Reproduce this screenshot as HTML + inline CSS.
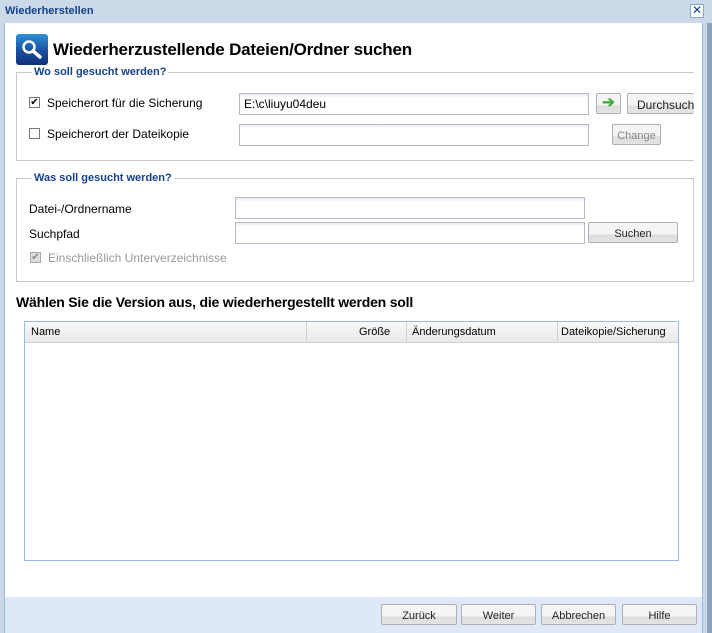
<!DOCTYPE html>
<html><head><meta charset="utf-8"><style>
*{margin:0;padding:0;box-sizing:border-box}
body{width:712px;height:633px;overflow:hidden;background:#c9d7e6;font-family:"Liberation Sans",sans-serif;font-size:12px;color:#000;position:relative}
.a{position:absolute}
.win{left:4px;top:23px;width:699px;height:610px;background:#fff;border-left:1px solid #99bbe8;border-right:1px solid #99bbe8}
.foot{left:5px;top:597px;width:697px;height:36px;background:#dfe8f6}
.inp{position:absolute;border:1px solid #b5b8c8;background:#fff;background-image:linear-gradient(#e8ecf0,#fff 4px);height:22px;font-size:12px;padding:3px 4px}
.btn{position:absolute;border:1px solid #b0b0b0;border-radius:2px;background:linear-gradient(#f4f4f4 0,#f4f4f4 60%,#dcdcdc 60%,#e4e4e4);font-size:11px;text-align:center;line-height:17px;padding-top:3px;height:21px;color:#222}
.fs{position:absolute;border:1px solid #c8c8c8}
.lg{position:absolute;background:#fff;color:#15428b;font-weight:bold;font-size:11px;padding:0 2px}
.cb{position:absolute;width:11px;height:11px;border:1px solid #777;background:#fff;font-size:10px;line-height:9px;text-align:center}
.lbl{position:absolute;font-size:12px}
</style></head><body>
<div class="a" style="left:0;top:0;width:712px;height:23px;background:#cbd9e8"></div>
<div class="a" style="left:5px;top:5px;color:#15428b;font-weight:bold;font-size:11px">Wiederherstellen</div>
<div class="a" style="left:690px;top:4px;width:14px;height:14px;border:1px solid #8aa6cc;background:#fff;color:#15428b;font-size:12px;line-height:11px;text-align:center">✕</div>
<div class="a" style="left:707px;top:23px;width:5px;height:610px;background:#8ea2b8"></div>
<div class="a win"></div>
<div class="a foot"></div>
<div class="a" style="left:16px;top:34px;width:32px;height:31px;border-radius:3px;background:linear-gradient(#2f8fd8,#1a4f9e 55%,#0f2f78)">
<svg width="32" height="31"><circle cx="13" cy="13" r="5.5" fill="none" stroke="#fff" stroke-width="2.5"/><line x1="17" y1="17" x2="24" y2="23" stroke="#fff" stroke-width="3.5" stroke-linecap="round"/></svg></div>
<div class="a" style="left:53px;top:40px;font-size:17px;font-weight:bold;letter-spacing:-0.2px">Wiederherzustellende Dateien/Ordner suchen</div>

<div class="a" style="left:16px;top:72px;width:678px;height:1px;background:#c8c8c8"></div>
<div class="a" style="left:16px;top:72px;width:1px;height:89px;background:#c8c8c8"></div>
<div class="a" style="left:16px;top:160px;width:678px;height:1px;background:#c8c8c8"></div>
<div class="lg" style="left:32px;top:66px">Wo soll gesucht werden?</div>
<div class="cb" style="left:29px;top:97px">✔</div>
<div class="lbl" style="left:47px;top:96px">Speicherort für die Sicherung</div>
<div class="inp" style="left:239px;top:93px;width:350px">E:\c\liuyu04deu</div>
<div class="btn" style="left:596px;top:93px;width:25px;color:#4a4;font-size:15px;font-weight:bold;line-height:16px;padding-top:1px">➔</div>
<div class="btn" style="left:627px;top:93px;width:67px;font-size:12px;border-right:none;text-align:left;padding-left:9px;overflow:hidden;white-space:nowrap">Durchsuche</div>
<div class="cb" style="left:29px;top:128px"></div>
<div class="lbl" style="left:47px;top:127px">Speicherort der Dateikopie</div>
<div class="inp" style="left:239px;top:124px;width:350px"></div>
<div class="btn" style="left:612px;top:124px;width:49px;color:#888">Change</div>

<div class="fs" style="left:16px;top:178px;width:678px;height:104px"></div>
<div class="lg" style="left:32px;top:172px">Was soll gesucht werden?</div>
<div class="lbl" style="left:29px;top:202px">Datei-/Ordnername</div>
<div class="inp" style="left:235px;top:197px;width:350px"></div>
<div class="lbl" style="left:29px;top:227px">Suchpfad</div>
<div class="inp" style="left:235px;top:222px;width:350px"></div>
<div class="btn" style="left:588px;top:222px;width:90px">Suchen</div>
<div class="cb" style="left:30px;top:252px;border-color:#aaa;background:#ddd;color:#888">✔</div>
<div class="lbl" style="left:48px;top:251px;color:#999">Einschließlich Unterverzeichnisse</div>

<div class="a" style="left:16px;top:294px;font-size:14px;font-weight:bold;letter-spacing:-0.2px">Wählen Sie die Version aus, die wiederhergestellt werden soll</div>
<div class="a" style="left:24px;top:321px;width:655px;height:240px;border:1px solid #99bbe8"></div>
<div class="a" style="left:25px;top:322px;width:653px;height:21px;background:linear-gradient(#f9f9f9,#e8e8e8);border-bottom:1px solid #d0d0d0;font-size:11px">
<span class="a" style="left:6px;top:4px">Name</span>
<span class="a" style="left:281px;top:0;width:1px;height:20px;background:#d0d0d0"></span>
<span class="a" style="left:334px;top:4px">Größe</span>
<span class="a" style="left:381px;top:0;width:1px;height:20px;background:#d0d0d0"></span>
<span class="a" style="left:387px;top:4px">Änderungsdatum</span>
<span class="a" style="left:532px;top:0;width:1px;height:20px;background:#d0d0d0"></span>
<span class="a" style="left:536px;top:4px">Dateikopie/Sicherung</span>
</div>

<div class="btn" style="left:381px;top:604px;width:76px">Zurück</div>
<div class="btn" style="left:461px;top:604px;width:75px">Weiter</div>
<div class="btn" style="left:541px;top:604px;width:75px">Abbrechen</div>
<div class="btn" style="left:622px;top:604px;width:75px">Hilfe</div>
</body></html>
